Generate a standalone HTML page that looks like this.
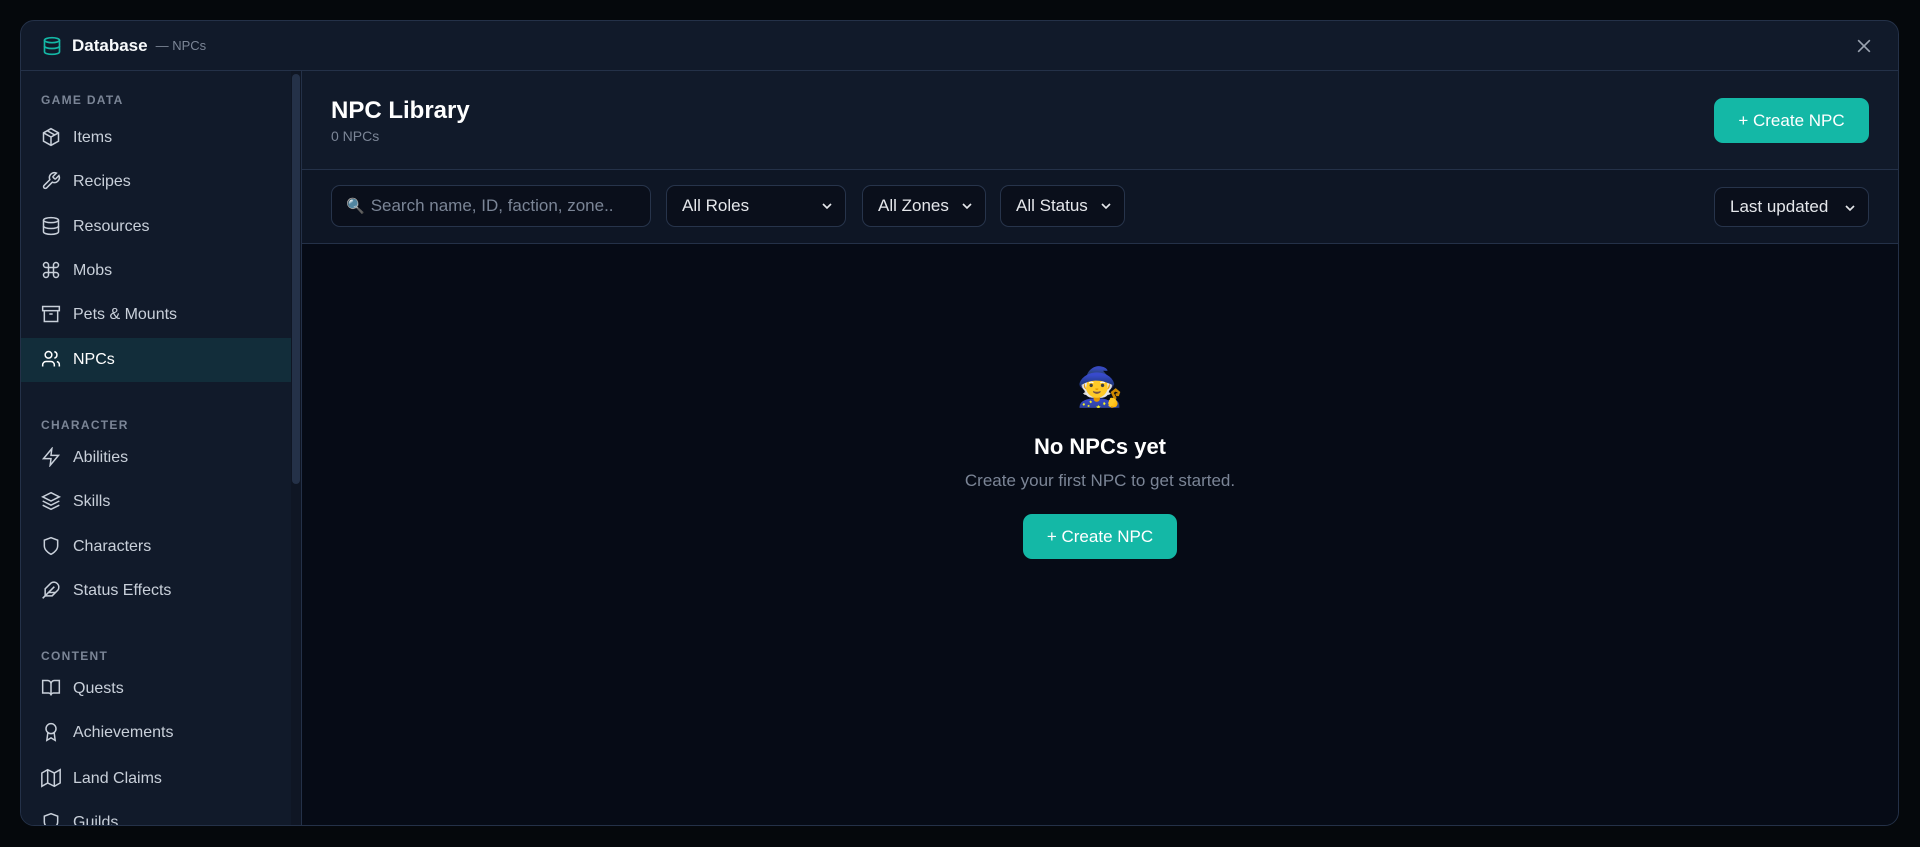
<!DOCTYPE html>
<html><head><meta charset="utf-8"><style>
*{box-sizing:border-box;margin:0;padding:0}
body{width:1920px;height:847px;background:#05080c;font-family:"Liberation Sans",sans-serif;position:relative;overflow:hidden;color:#e5e7eb}
.modal{position:absolute;left:20px;top:20px;width:1879px;height:806px;background:#111a2a;border:1px solid #243148;border-radius:14px;overflow:hidden}
.hdr{position:absolute;left:0;top:0;right:0;height:50px;border-bottom:1px solid #243148;display:flex;align-items:center;padding-left:21px}
.hdr .t{font-weight:bold;font-size:17px;color:#f8fafc;margin-left:10px}
.hdr .s{font-size:13px;color:#7b8596;margin-left:8px}
.close{position:absolute;right:24px;top:15px}
.side{position:absolute;left:0;top:50px;width:270px;bottom:0;background:#111a2a}
.sb{position:absolute;left:270px;top:50px;width:10px;bottom:0;background:#0f1624}
.sb div{position:absolute;left:1px;top:3px;width:8px;height:410px;background:#243148;border-radius:4px}
.vline{position:absolute;left:280px;top:50px;width:1px;bottom:0;background:#243148}
.lab{position:absolute;left:20px;font-size:12px;letter-spacing:1.3px;font-weight:bold;color:#7b8596}
.it{position:absolute;left:0;width:270px;height:44px;display:flex;align-items:center;padding-left:20px;font-size:16px;color:#c9d0da}
.it svg{margin-right:12px;margin-top:-2px}
.it.act{background:#122d3a;color:#fff}
.main{position:absolute;left:281px;top:50px;right:0;bottom:0;background:#060b16}
.top{position:absolute;left:0;top:0;right:0;height:99px;background:#111a2a;border-bottom:1px solid #243148}
.top h1{position:absolute;left:29px;top:26px;font-size:24px;color:#fff}
.top .c{position:absolute;left:29px;font-size:14px;color:#7b8596}
.btn{position:absolute;background:#14b8a6;color:#fff;border-radius:9px;font-size:17px;display:flex;align-items:center;justify-content:center}
.fb{position:absolute;left:0;top:99px;right:0;height:74px;background:#0e1625;border-bottom:1px solid #243148}
.inp{position:absolute;top:15px;height:42px;border:1px solid #27344b;border-radius:9px;background:#0a0f1b;display:flex;align-items:center;font-size:17px;color:#e5e7eb;padding-left:15px}
.inp .ch{position:absolute;right:10px;top:12px}
</style></head><body>
<div class="modal">
 <div class="hdr">
  <svg width="20" height="22" viewBox="0 0 24 24" fill="none" stroke="#14b8a6" stroke-width="2"><ellipse cx="12" cy="5" rx="9" ry="3"/><path d="M3 5v14c0 1.7 4 3 9 3s9-1.3 9-3V5"/><path d="M3 12c0 1.7 4 3 9 3s9-1.3 9-3"/></svg>
  <span class="t">Database</span><span class="s">— NPCs</span>
  <svg class="close" width="20" height="20" viewBox="0 0 24 24" fill="none" stroke="#9aa3b0" stroke-width="2"><path d="M5 5l14 14M19 5L5 19"/></svg>
 </div>
 <div class="side">
  <div class="lab" style="top:22px">GAME DATA</div>
  <div class="it" style="top:45px"><svg width="20" height="20" viewBox="0 0 24 24" fill="none" stroke="#c9d0da" stroke-width="1.8"><path d="M12 2l9 5v10l-9 5-9-5V7z"/><path d="M3 7l9 5 9-5M12 12v10M7.5 4.5l9 5"/></svg>Items</div>
  <div class="it" style="top:89px"><svg width="20" height="20" viewBox="0 0 24 24" fill="none" stroke="#c9d0da" stroke-width="1.8"><path d="M14.7 6.3a1 1 0 000 1.4l1.6 1.6a1 1 0 001.4 0l3.8-3.8a6 6 0 01-7.9 7.9l-6.9 6.9a2.1 2.1 0 01-3-3l6.9-6.9a6 6 0 017.9-7.9z"/></svg>Recipes</div>
  <div class="it" style="top:134px"><svg width="20" height="20" viewBox="0 0 24 24" fill="none" stroke="#c9d0da" stroke-width="1.8"><ellipse cx="12" cy="5" rx="9" ry="3"/><path d="M3 5v14c0 1.7 4 3 9 3s9-1.3 9-3V5"/><path d="M3 12c0 1.7 4 3 9 3s9-1.3 9-3"/></svg>Resources</div>
  <div class="it" style="top:178px"><svg width="20" height="20" viewBox="0 0 24 24" fill="none" stroke="#c9d0da" stroke-width="1.8"><path d="M15 6v12a3 3 0 103-3H6a3 3 0 103 3V6a3 3 0 10-3 3h12a3 3 0 10-3-3"/></svg>Mobs</div>
  <div class="it" style="top:222px"><svg width="20" height="20" viewBox="0 0 24 24" fill="none" stroke="#c9d0da" stroke-width="1.8"><rect x="2" y="3" width="20" height="5"/><path d="M4 8v13h16V8M10 12h4"/></svg>Pets &amp; Mounts</div>
  <div class="it act" style="top:267px"><svg width="20" height="20" viewBox="0 0 24 24" fill="none" stroke="#fff" stroke-width="1.8"><path d="M16 21v-2a4 4 0 00-4-4H6a4 4 0 00-4 4v2"/><circle cx="9" cy="7" r="4"/><path d="M22 21v-2a4 4 0 00-3-3.9M16 3.1a4 4 0 010 7.8"/></svg>NPCs</div>
  <div class="lab" style="top:347px">CHARACTER</div>
  <div class="it" style="top:365px"><svg width="20" height="20" viewBox="0 0 24 24" fill="none" stroke="#c9d0da" stroke-width="1.8"><path d="M13 2L3 14h9l-1 8 10-12h-9z"/></svg>Abilities</div>
  <div class="it" style="top:409px"><svg width="20" height="20" viewBox="0 0 24 24" fill="none" stroke="#c9d0da" stroke-width="1.8"><path d="M12 2l10 5-10 5L2 7z"/><path d="M2 12l10 5 10-5M2 17l10 5 10-5"/></svg>Skills</div>
  <div class="it" style="top:454px"><svg width="20" height="20" viewBox="0 0 24 24" fill="none" stroke="#c9d0da" stroke-width="1.8"><path d="M12 22s8-4 8-10V5l-8-3-8 3v7c0 6 8 10 8 10z"/></svg>Characters</div>
  <div class="it" style="top:498px"><svg width="20" height="20" viewBox="0 0 24 24" fill="none" stroke="#c9d0da" stroke-width="1.8"><path d="M20.2 12.2A6 6 0 0011.8 3.8L5 10.6V19h8.4z"/><path d="M16 8L2 22M17.5 15H9"/></svg>Status Effects</div>
  <div class="lab" style="top:578px">CONTENT</div>
  <div class="it" style="top:596px"><svg width="20" height="20" viewBox="0 0 24 24" fill="none" stroke="#c9d0da" stroke-width="1.8"><path d="M2 3h6a4 4 0 014 4v14a3 3 0 00-3-3H2zM22 3h-6a4 4 0 00-4 4v14a3 3 0 013-3h7z"/></svg>Quests</div>
  <div class="it" style="top:640px"><svg width="20" height="20" viewBox="0 0 24 24" fill="none" stroke="#c9d0da" stroke-width="1.8"><circle cx="12" cy="8" r="6"/><path d="M8.2 13L7 22l5-3 5 3-1.2-9"/></svg>Achievements</div>
  <div class="it" style="top:686px"><svg width="20" height="20" viewBox="0 0 24 24" fill="none" stroke="#c9d0da" stroke-width="1.8"><path d="M1 6v16l7-4 8 4 7-4V2l-7 4-8-4z"/><path d="M8 2v16M16 6v16"/></svg>Land Claims</div>
  <div class="it" style="top:730px"><svg width="20" height="20" viewBox="0 0 24 24" fill="none" stroke="#c9d0da" stroke-width="1.8"><path d="M12 22s8-4 8-10V5l-8-3-8 3v7c0 6 8 10 8 10z"/></svg>Guilds</div>
 </div>
 <div class="sb"><div></div></div>
 <div class="vline"></div>
 <div class="main">
  <div class="top">
   <h1>NPC Library</h1>
   <div class="c" style="top:57px">0 NPCs</div>
   <div class="btn" style="right:29px;top:27px;width:155px;height:45px">+ Create NPC</div>
  </div>
  <div class="fb">
   <div class="inp" style="left:29px;width:320px;color:#7b8596;padding-left:14px"><span style="font-size:15px;margin-right:6px">🔍</span>Search name, ID, faction, zone..</div>
   <div class="inp" style="left:364px;width:180px">All Roles<svg class="ch" width="16" height="16" viewBox="0 0 24 24" fill="none" stroke="#e5e7eb" stroke-width="2.5"><path d="M6 9l6 6 6-6"/></svg></div>
   <div class="inp" style="left:560px;width:124px">All Zones<svg class="ch" width="16" height="16" viewBox="0 0 24 24" fill="none" stroke="#e5e7eb" stroke-width="2.5"><path d="M6 9l6 6 6-6"/></svg></div>
   <div class="inp" style="left:698px;width:125px">All Status<svg class="ch" width="16" height="16" viewBox="0 0 24 24" fill="none" stroke="#e5e7eb" stroke-width="2.5"><path d="M6 9l6 6 6-6"/></svg></div>
   <div class="inp" style="right:29px;width:155px;top:17px;height:40px">Last updated<svg class="ch" width="16" height="16" viewBox="0 0 24 24" fill="none" stroke="#e5e7eb" stroke-width="2.5"><path d="M6 9l6 6 6-6"/></svg></div>
  </div>
  <div style="position:absolute;left:0;right:0;top:295px;text-align:center;font-size:38px;line-height:44px">🧙</div>
  <div style="position:absolute;left:0;right:0;top:363px;text-align:center;font-size:22px;font-weight:bold;color:#fff">No NPCs yet</div>
  <div style="position:absolute;left:0;right:0;top:400px;text-align:center;font-size:17px;color:#7b8596">Create your first NPC to get started.</div>
  <div class="btn" style="left:721px;top:443px;width:154px;height:45px">+ Create NPC</div>
 </div>
</div>
</body></html>
